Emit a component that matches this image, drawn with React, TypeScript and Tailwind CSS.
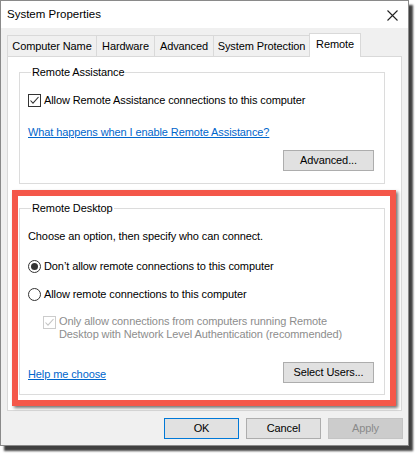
import React from 'react';

const TABS = [
  { label: 'Computer Name', w: 'w-[90px]' },
  { label: 'Hardware', w: 'w-[59px]' },
  { label: 'Advanced', w: 'w-[60px]' },
  { label: 'System Protection', w: 'w-[97px]' },
];

const CheckBox: React.FC<{ disabled?: boolean }> = ({ disabled }) => (
  <span
    className={`w-[13px] h-[13px] shrink-0 border bg-white flex items-center justify-center ${
      disabled ? 'border-[#cccccc]' : 'border-[#333333]'
    }`}
  >
    <svg width="11" height="11" viewBox="0 0 11 11" fill="none">
      <path d="M1.5 5.5 L4 8.2 L9.5 2" stroke={disabled ? '#c4c4c4' : '#333333'} strokeWidth="1.1" />
    </svg>
  </span>
);

const Radio: React.FC<{ checked?: boolean }> = ({ checked }) => (
  <span className="w-[13px] h-[13px] shrink-0 rounded-full border border-[#333333] bg-white flex items-center justify-center">
    {checked && <span className="w-[7px] h-[7px] rounded-full bg-[#333333]" />}
  </span>
);

const Button: React.FC<{ children: React.ReactNode; className?: string }> = ({ children, className }) => (
  <div
    className={`h-[21px] flex items-center justify-center border ${
      className ?? 'bg-[#e1e1e1] border-[#adadad] text-black'
    }`}
  >
    {children}
  </div>
);

export default function App() {
  return (
    <div className="w-[418px] h-[456px] bg-white font-['Liberation_Sans',Arial,sans-serif] text-[11px] tracking-[-0.1px] text-black">
      <div className="w-[409px] h-[446px] bg-[#f0f0f0] border border-[#8a8a8a] shadow-[4px_5px_2px_rgba(0,0,0,0.75)] flex flex-col">
        {/* title bar */}
        <div className="h-[27px] bg-white flex items-center justify-between pl-[6px] pr-[10px]">
          <span className="text-[11.5px] tracking-normal mt-[1px]">System Properties</span>
          <svg width="11" height="11" viewBox="0 0 11 11" fill="none" className="mt-[2px]">
            <path d="M0.5 0.5 L10.5 10.5 M10.5 0.5 L0.5 10.5" stroke="#222" strokeWidth="1.1" />
          </svg>
        </div>

        <div className="flex flex-col px-[6px] pt-[5px]">
          {/* tabs */}
          <div className="flex items-end -mb-px relative z-10">
            {TABS.map((t) => (
              <div
                key={t.label}
                className={`${t.w} h-[22px] border border-[#d9d9d9] -ml-px first:ml-0 bg-[#f0f0f0] flex items-center justify-center`}
              >
                {t.label}
              </div>
            ))}
            <div className="w-[52px] h-[24px] border border-b-0 border-[#d9d9d9] -ml-px bg-white flex items-center justify-center pb-[2px]">
              Remote
            </div>
          </div>

          {/* tab panel */}
          <div className="h-[355px] border border-[#d9d9d9] bg-white flex flex-col">
            <fieldset className="mt-[8px] ml-[11px] w-[366px] border border-[#dcdcdc] px-[8px] pb-[12px] flex flex-col">
              <legend className="ml-[3px] px-[1px] leading-[14px]">Remote Assistance</legend>
              <div className="mt-[14px] flex items-center gap-[3px] leading-[14px]">
                <CheckBox />
                <span>Allow Remote Assistance connections to this computer</span>
              </div>
              <div className="mt-[18px] leading-[14px] text-[#0066cc] underline">
                What happens when I enable Remote Assistance?
              </div>
              <div className="mt-[11px] flex justify-end pr-[2px]">
                <div className="w-[91px]">
                  <Button>Advanced...</Button>
                </div>
              </div>
            </fieldset>

            {/* highlighted group */}
            <div className="mt-[6px] ml-[4px] w-[384px] border-[6px] border-[#f4574a] shadow-[2px_2px_3px_rgba(0,0,0,0.55)] pt-[5px] pb-[5px]">
              <fieldset className="ml-[1px] w-[366px] border border-[#dcdcdc] px-[8px] pb-[11px] flex flex-col">
                <legend className="ml-[3px] px-[1px] leading-[14px]">Remote Desktop</legend>
                <div className="mt-[14px] leading-[14px]">Choose an option, then specify who can connect.</div>
                <div className="mt-[16px] flex items-center gap-[3px] leading-[14px]">
                  <Radio checked />
                  <span>Don&rsquo;t allow remote connections to this computer</span>
                </div>
                <div className="mt-[14px] flex items-center gap-[3px] leading-[14px]">
                  <Radio />
                  <span>Allow remote connections to this computer</span>
                </div>
                <div className="mt-[14px] ml-[15px] flex items-start gap-[3px] leading-[13px] text-[#8d8d8d]">
                  <span className="mt-[1px]">
                    <CheckBox disabled />
                  </span>
                  <span>
                    Only allow connections from computers running Remote
                    <br />
                    Desktop with Network Level Authentication (recommended)
                  </span>
                </div>
                <div className="mt-[21px] flex items-center justify-between pr-[2px]">
                  <span className="text-[#0066cc] underline leading-[14px] mt-[3px]">Help me choose</span>
                  <div className="w-[91px]">
                    <Button>Select Users...</Button>
                  </div>
                </div>
              </fieldset>
            </div>
          </div>

          {/* dialog buttons */}
          <div className="mt-[7px] flex justify-end gap-[7px] -mr-[1px]">
            <div className="w-[75px]">
              <Button className="bg-[#e1e1e1] border-[#0078d7] text-black">OK</Button>
            </div>
            <div className="w-[75px]">
              <Button>Cancel</Button>
            </div>
            <div className="w-[75px]">
              <Button className="bg-[#cccccc] border-[#c4c4c4] text-[#8a8a8a]">Apply</Button>
            </div>
          </div>
        </div>
      </div>
    </div>
  );
}
